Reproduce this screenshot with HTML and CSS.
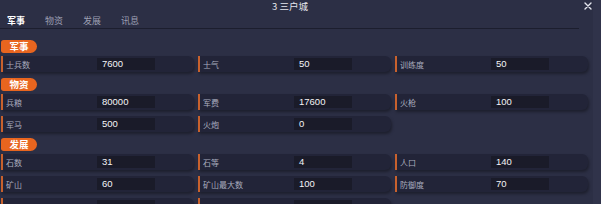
FILE: index.html
```html
<!DOCTYPE html>
<html lang="zh">
<head>
    <meta charset="UTF-8">
    <title>3 三户城</title>
    <link rel="stylesheet" href="styles.css">
</head>
<body>
    <div class="panel">
        <div class="title-bar">
            <span class="title">3 三户城</span>
            <svg class="close" width="8" height="8" viewBox="0 0 8 8">
                <path d="M1 1 L7 7 M7 1 L1 7" stroke="#e4e6ee" stroke-width="1.4" stroke-linecap="round"/>
            </svg>
        </div>
        <div class="tabs">
            <span class="tab active">军事</span>
            <span class="tab">物资</span>
            <span class="tab">发展</span>
            <span class="tab">讯息</span>
        </div>

        <div class="content">
            <div class="section">
                <div class="badge">军事</div>
                <div class="grid">
                    <div class="cell"><span class="label">士兵数</span><span class="value">7600</span></div>
                    <div class="cell"><span class="label">士气</span><span class="value">50</span></div>
                    <div class="cell"><span class="label">训练度</span><span class="value">50</span></div>
                </div>
            </div>

            <div class="section">
                <div class="badge">物资</div>
                <div class="grid">
                    <div class="cell"><span class="label">兵粮</span><span class="value">80000</span></div>
                    <div class="cell"><span class="label">军费</span><span class="value">17600</span></div>
                    <div class="cell"><span class="label">火枪</span><span class="value">100</span></div>
                    <div class="cell"><span class="label">军马</span><span class="value">500</span></div>
                    <div class="cell"><span class="label">火炮</span><span class="value">0</span></div>
                </div>
            </div>

            <div class="section">
                <div class="badge">发展</div>
                <div class="grid">
                    <div class="cell"><span class="label">石数</span><span class="value">31</span></div>
                    <div class="cell"><span class="label">石等</span><span class="value">4</span></div>
                    <div class="cell"><span class="label">人口</span><span class="value">140</span></div>
                    <div class="cell"><span class="label">矿山</span><span class="value">60</span></div>
                    <div class="cell"><span class="label">矿山最大数</span><span class="value">100</span></div>
                    <div class="cell"><span class="label">防御度</span><span class="value">70</span></div>
                    <!-- next row is below the fold -->
                    <div class="cell"><span class="label"></span><span class="value"></span></div>
                    <div class="cell"><span class="label"></span><span class="value"></span></div>
                </div>
            </div>
        </div>
        <div class="scroll-track"></div>
    </div>
</body>
</html>
```

FILE: styles.css
```css
body {
    margin: 0;
    width: 601px;
    height: 204px;
    overflow: hidden;
    background-color: #2c2f45;
    font-family: "Noto Sans CJK SC", "Noto Sans", sans-serif;
    color: #e8e9f0;
}

.panel {
    position: relative;
    height: 204px;
}

.title-bar {
    width: 580px;
    height: 12px;
    display: flex;
    justify-content: center;
    align-items: center;
}

.title {
    font-size: 9.5px;
    line-height: 12px;
    color: #e6e7ee;
}

.close {
    position: absolute;
    top: 2px;
    right: 9px;
}

.tabs {
    width: 579px;
    height: 16px;
    padding-left: 7px;
    box-sizing: border-box;
    display: flex;
    gap: 20px;
    align-items: center;
    border-bottom: 1px solid #1c1e2e;
    margin-top: 1px;
}

.tab {
    font-size: 9px;
    line-height: 12px;
    color: #9c9fb2;
}

.tab.active {
    color: #ffffff;
    font-weight: bold;
}

.content {
    padding: 11px 0 0 1px;
    display: flex;
    flex-direction: column;
    gap: 6px;
}

.badge {
    width: 36px;
    height: 13px;
    margin-bottom: 3px;
    background-color: #e8651f;
    border-radius: 3px 7px 7px 3px;
    color: #ffffff;
    font-size: 9.5px;
    font-weight: bold;
    line-height: 13px;
    text-align: center;
}

.grid {
    display: grid;
    grid-template-columns: 193px 193px 193px;
    column-gap: 4px;
    row-gap: 6px;
}

.cell {
    height: 16px;
    display: flex;
    align-items: center;
    background-color: #222438;
    border-left: 2px solid #c8612d;
    border-radius: 0 6px 6px 0;
    box-shadow: 1px 2px 3px rgba(0, 0, 0, 0.35);
}

.label {
    width: 91px;
    padding-left: 3px;
    font-size: 8px;
    color: #a9acbe;
    white-space: nowrap;
}

.value {
    width: 53px;
    height: 12px;
    padding-left: 5px;
    background-color: #1a1b29;
    font-family: "Liberation Sans", sans-serif;
    font-size: 9.5px;
    line-height: 12px;
    color: #f4f4f6;
}

.scroll-track {
    position: absolute;
    top: 0;
    right: 0;
    width: 8px;
    height: 204px;
    background-color: #30334a;
}
```
